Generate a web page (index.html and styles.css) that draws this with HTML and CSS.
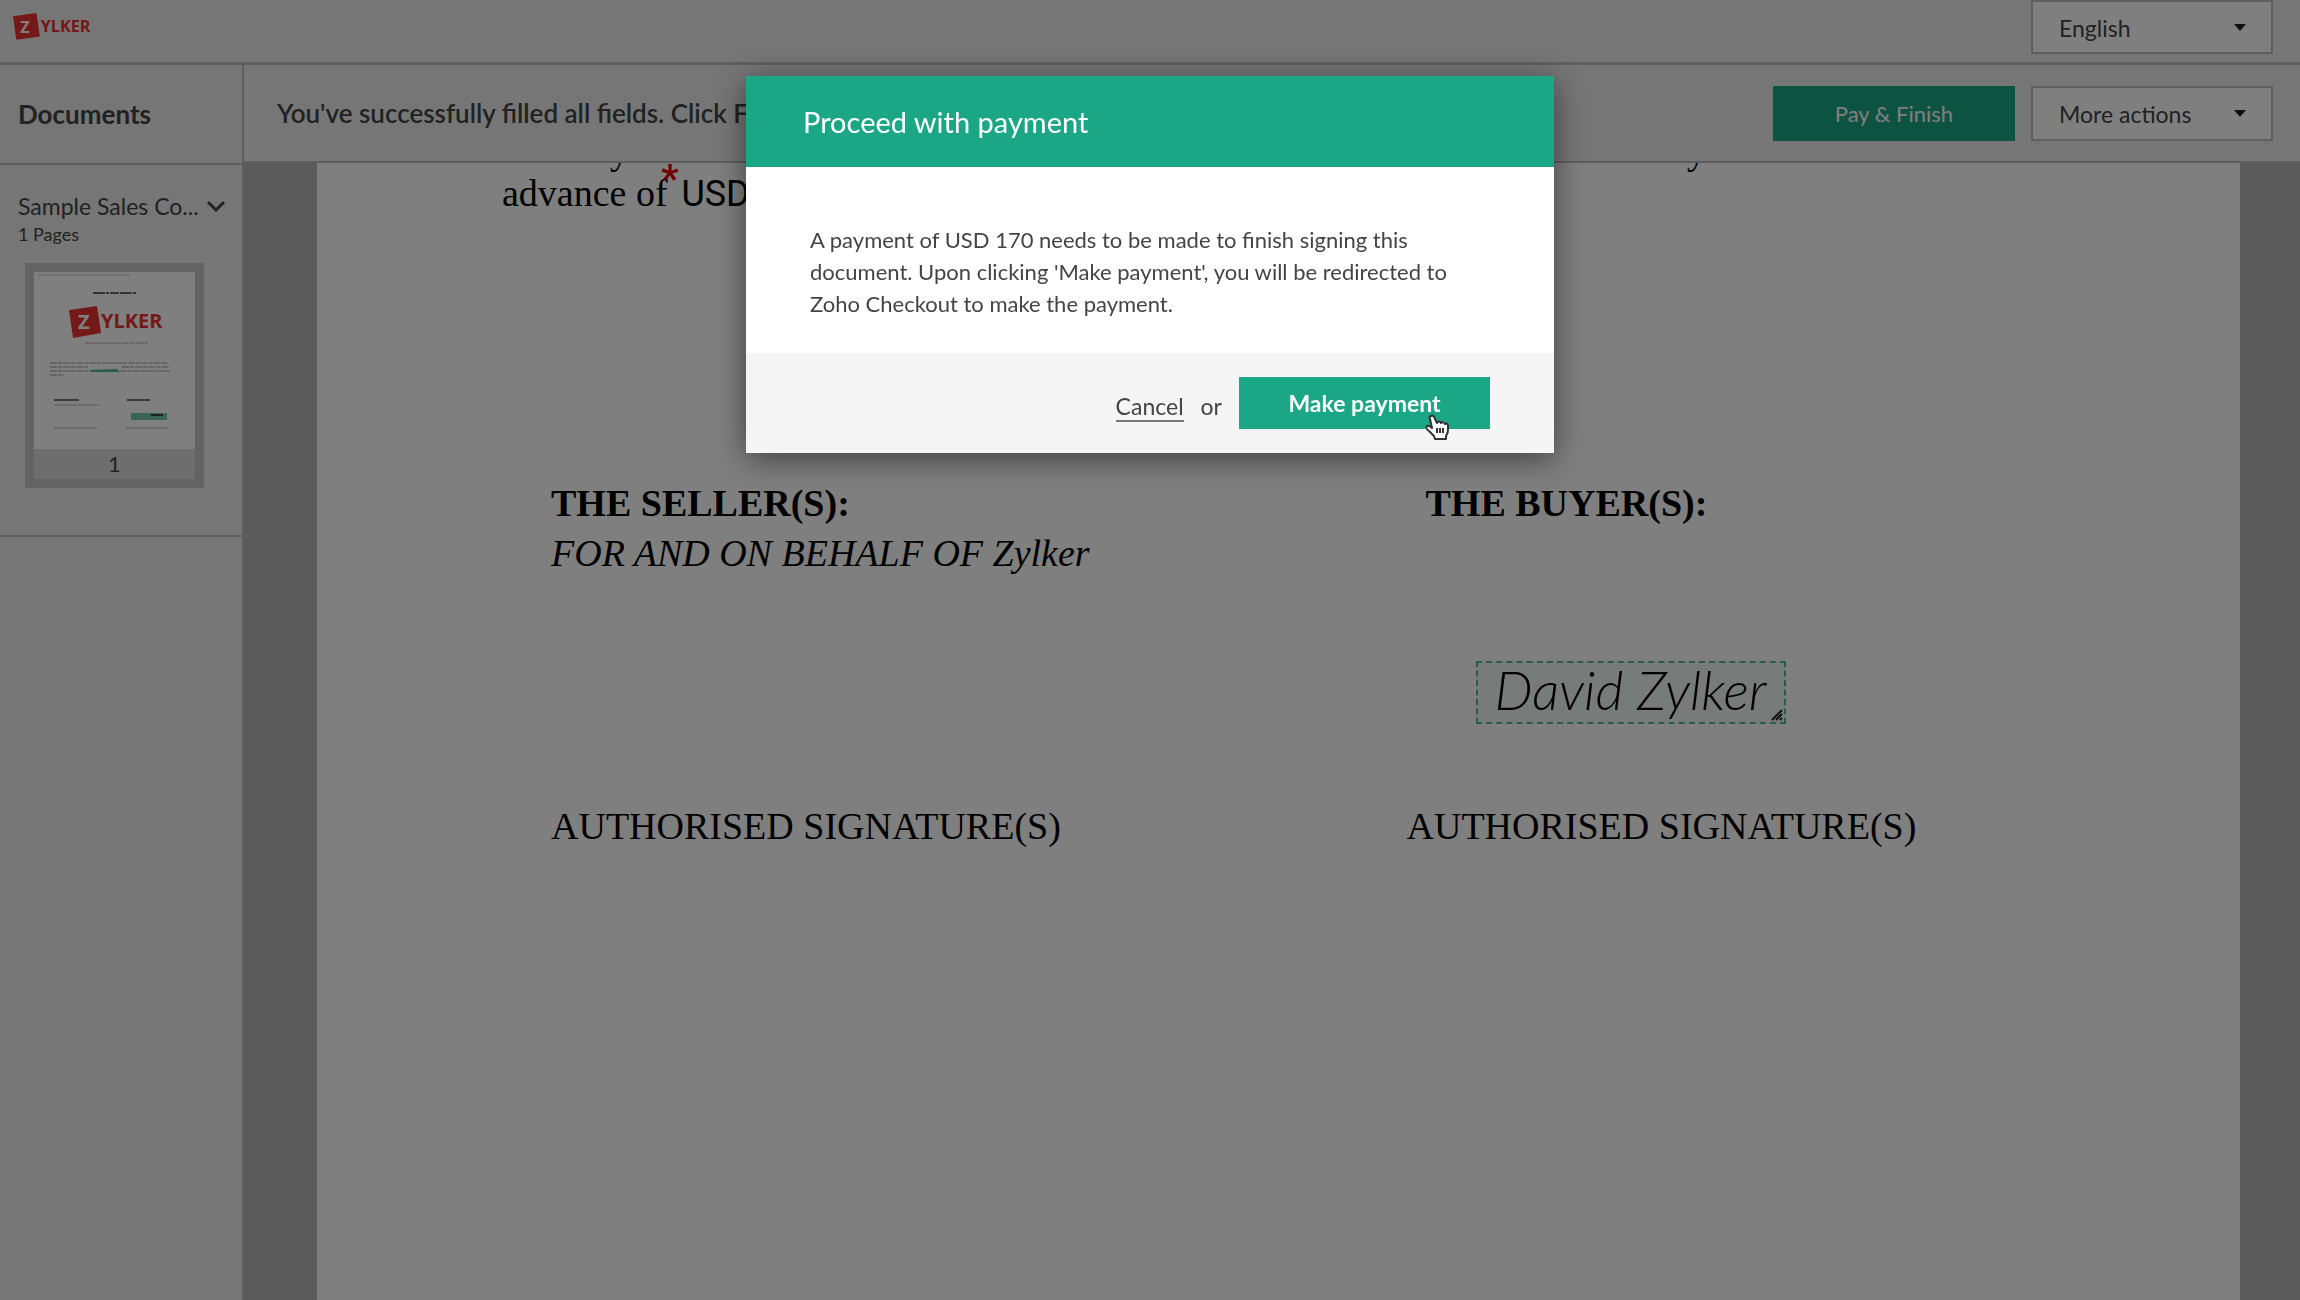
FILE: index.html
```html
<!DOCTYPE html>
<html lang="en">
<head>
  <meta charset="utf-8">
  <title>Proceed with payment</title>
  <link rel="stylesheet" href="styles.css">
</head>
<body>
  <header class="topbar">
    <svg class="logo" viewBox="0 0 96 34" role="img" aria-label="Zylker">
      <path d="M0 5L29 1L33 30L4 34Z" fill="#e8322e"/>
      <text x="9" y="25" class="logo-z">Z</text>
      <text x="34" y="24" class="logo-text">YLKER</text>
    </svg>
    <div class="dropdown">
      <select class="control" aria-label="Language">
        <option>English</option>
      </select>
    </div>
  </header>

  <div class="layout">
    <aside class="sidebar">
      <h2>Documents</h2>
      <div class="doc-group">
        <button class="doc-name">
          <span>Sample Sales Co...</span>
          <svg viewBox="0 0 18 12" fill="none" stroke="currentColor" stroke-width="3">
            <path d="M1 2l8 8 8-8"/>
          </svg>
        </button>
        <p class="doc-pages">1 Pages</p>
        <a class="thumb" href="#page-1">
          <svg viewBox="0 0 161 177" aria-hidden="true">
            <rect width="161" height="177" fill="#fff"/>
            <path d="M4 3h92" stroke="#bbb" stroke-width="1" stroke-dasharray="9 1 5 1"/>
            <path d="M59 21h44" stroke="#666" stroke-width="2" stroke-dasharray="12 1 3 1 9 1"/>
            <path d="M35 38L63 34L67 61L39 66Z" fill="#e8322e"/>
            <text x="44" y="57" class="logo-z">Z</text>
            <text x="67" y="56" class="logo-text">YLKER</text>
            <path d="M51 71h63" stroke="#aaa" stroke-width="1" stroke-dasharray="5 1 8 1"/>
            <path d="M16 91h118M16 95h38M88 95h48M16 99h40M86 99h50M16 103h14" stroke="#999" stroke-width="1" stroke-dasharray="7 1 4 1"/>
            <path d="M55 98l28-1 3 3H58z" fill="#55b895"/>
            <path d="M20 128h25M93 128h23" stroke="#777" stroke-width="2"/>
            <path d="M20 133h46M20 156h43M92 156h42" stroke="#aaa" stroke-width="1" stroke-dasharray="8 1 5 1"/>
            <rect x="97" y="141" width="36" height="7" fill="#75c8aa"/>
            <path d="M117 143h12" stroke="#444" stroke-width="2"/>
          </svg>
          <span>1</span>
        </a>
      </div>
    </aside>

    <main class="main">
      <div class="actionbar">
        <p>You've successfully filled all fields. Click F</p>
        <div class="actions">
          <button class="btn btn-pay">Pay &amp; Finish</button>
          <div class="dropdown">
            <button class="control" aria-haspopup="menu">More actions</button>
          </div>
        </div>
      </div>

      <div class="viewer">
        <article class="page" id="page-1">
          <div class="clause">
            <p class="clause-end"><span>y</span><span>y</span></p>
            <p class="advance">advance of <sup class="required">*</sup><span class="amount">USD</span></p>
          </div>
          <div class="parties">
            <section>
              <h3>THE SELLER(S):</h3>
              <p class="behalf">FOR AND ON BEHALF OF Zylker</p>
              <p class="authorised">AUTHORISED SIGNATURE(S)</p>
            </section>
            <section class="buyer">
              <h3>THE BUYER(S):</h3>
              <div class="signature">
                <span>David Zylker</span>
                <svg class="resize" viewBox="0 0 12 12" stroke="#222" stroke-width="2">
                  <path d="M1 11L11 1M5 11l6-6M9 11l2-2"/>
                </svg>
              </div>
              <p class="authorised">AUTHORISED SIGNATURE(S)</p>
            </section>
          </div>
        </article>
      </div>
    </main>
  </div>

  <div class="overlay">
    <div class="modal" role="dialog" aria-modal="true" aria-labelledby="modal-title">
      <h1 id="modal-title">Proceed with payment</h1>
      <p class="modal-body">A payment of USD 170 needs to be made to finish signing this document. Upon clicking 'Make payment', you will be redirected to Zoho Checkout to make the payment.</p>
      <div class="modal-footer">
        <a href="#cancel">Cancel</a>
        <span>or</span>
        <button class="btn btn-make">Make payment
          <svg class="cursor" viewBox="0 0 24 26" fill="#fff" stroke="#333" stroke-width="2" stroke-linejoin="round">
            <path d="M6 2c2-1 3 0 4 3l2 4c1-2 3-2 4 0 1-1 3-1 4 1 2-1 3 0 3 2v4c0 3-1 4-2 6v3H10l-1-3-5-5c-3-2-3-3-2-5 2-1 3 0 5 2L5 5c-1-2 0-3 1-3z"/>
            <path d="M12 14v5M15 14v5M18 14v5"/>
          </svg>
        </button>
      </div>
    </div>
  </div>
</body>
</html>
```

FILE: styles.css
```css
* {
  box-sizing: border-box;
}
body {
  margin: 0;
  height: 100vh;
  display: flex;
  flex-direction: column;
  overflow: hidden;
  font-family: Lato, sans-serif;
  font-size: 22px;
  color: #444;
  background: #ededed;
}
h1, h2, h3, p {
  margin: 0;
}
button, select {
  font: inherit;
  color: inherit;
  cursor: pointer;
}

/* top bar */
.topbar {
  height: 65px;
  flex-shrink: 0;
  display: flex;
  justify-content: space-between;
  align-items: flex-start;
  padding: 0 27px 0 13px;
  border-bottom: 3px solid #bdbdbd;
}
.logo {
  width: 78px;
  height: 28px;
  margin-top: 12px;
}
.logo-z,
.logo-text {
  font-family: "Open Sans", sans-serif;
  font-weight: 700;
  font-size: 20px;
}
.logo-z {
  fill: #fff;
}
.logo-text {
  fill: #e8322e;
}
.dropdown {
  position: relative;
  width: 242px;
}
.dropdown::after {
  content: "";
  position: absolute;
  right: 27px;
  top: 50%;
  margin-top: -3px;
  border: 6px solid transparent;
  border-top: 7px solid #222;
  border-bottom: 0;
  pointer-events: none;
}
.control {
  appearance: none;
  display: block;
  width: 100%;
  height: 55px;
  padding: 2px 26px 0;
  border: 2px solid #bdbdbd;
  border-radius: 0;
  background: #fff;
  font-size: 23px;
  text-align: left;
}
.topbar .control {
  height: 54px;
}

/* sidebar */
.layout {
  flex: 1;
  display: flex;
  min-height: 0;
}
.sidebar {
  width: 244px;
  flex-shrink: 0;
  border-right: 2px solid #bdbdbd;
}
.sidebar h2 {
  height: 100px;
  line-height: 98px;
  padding-left: 18px;
  border-bottom: 2px solid #bdbdbd;
  font-size: 26px;
}
.doc-group {
  padding: 27px 18px 47px;
  border-bottom: 2px solid #bdbdbd;
}
.doc-name {
  display: flex;
  align-items: center;
  gap: 8px;
  padding: 0;
  border: 0;
  background: none;
  font-size: 23px;
  line-height: 28px;
  white-space: nowrap;
}
.doc-name svg {
  width: 18px;
  height: 12px;
}
.doc-pages {
  font-size: 18px;
  line-height: 28px;
}
.thumb {
  display: block;
  width: 179px;
  margin: 15px 0 0 7px;
  padding: 9px;
  background: #c6c6c6;
  color: inherit;
  text-align: center;
  text-decoration: none;
}
.thumb svg {
  display: block;
  width: 100%;
}
.thumb span {
  display: block;
  line-height: 30px;
  background: #dcdcdc;
}

/* main column */
.main {
  flex: 1;
  display: flex;
  flex-direction: column;
  min-width: 0;
}
.actionbar {
  height: 98px;
  flex-shrink: 0;
  display: flex;
  justify-content: space-between;
  align-items: center;
  padding: 0 27px 0 33px;
  border-bottom: 2px solid #bdbdbd;
}
.actionbar p {
  font-size: 26px;
  font-weight: 600;
}
.actions {
  display: flex;
  gap: 16px;
}
.btn {
  border: 0;
  background: #1ba685;
  color: #fff;
}
.btn-pay {
  width: 242px;
  height: 55px;
}
.viewer {
  flex: 1;
  min-height: 0;
  padding: 0 60px 0 73px;
  background: #b6b6b6;
}

/* contract */
.page {
  height: 100%;
  overflow: hidden;
  background: #fff;
  font-family: "Liberation Serif", serif;
  font-size: 38px;
  line-height: 50px;
  color: #000;
}
.clause {
  height: 327px;
  padding: 0 534px 0 185px;
}
.clause-end {
  display: flex;
  justify-content: space-between;
  height: 18px;
  margin-top: -12px;
  padding-left: 108px;
  line-height: 0;
}
.advance {
  line-height: 48px;
  white-space: nowrap;
}
.required {
  margin: 0 3px 0 -16px;
  color: #e00000;
  line-height: 0;
  font-family: Roboto, sans-serif;
  font-weight: 700;
  font-size: 38px;
}
.amount {
  font-family: Roboto, sans-serif;
  font-size: 36px;
}
.parties {
  display: grid;
  grid-template-columns: 1fr 1fr;
  gap: 22px;
  padding-left: 234px;
}
.parties h3 {
  font-size: 38px;
}
.behalf {
  font-style: italic;
  margin-bottom: 223px;
}
.buyer h3 {
  padding-left: 19px;
}
.signature {
  position: relative;
  width: 310px;
  height: 63px;
  margin: 133px 0 77px 69px;
  border: 2px dashed #55b895;
  background: #eef8f4;
  font-family: Lato, cursive;
  font-style: italic;
  font-weight: 300;
  font-size: 54px;
  line-height: 54px;
  text-align: center;
}
.resize {
  position: absolute;
  right: 1px;
  bottom: 1px;
  width: 12px;
  height: 12px;
}

/* payment dialog */
.overlay {
  position: fixed;
  inset: 0;
  display: flex;
  justify-content: center;
  align-items: flex-start;
  padding-top: 76px;
  background: rgba(0, 0, 0, 0.5);
}
.modal {
  width: 808px;
  background: #fff;
  box-shadow: 0 6px 30px rgba(0, 0, 0, 0.5);
}
.modal h1 {
  padding: 0 57px;
  background: #1ba685;
  color: #fff;
  font-size: 29px;
  font-weight: 400;
  line-height: 91px;
}
.modal-body {
  padding: 57px 64px 33px;
  line-height: 32px;
}
.modal-footer {
  display: flex;
  justify-content: flex-end;
  align-items: center;
  gap: 17px;
  height: 100px;
  padding: 0 64px;
  background: #f5f5f5;
  font-size: 23px;
}
.modal-footer a,
.modal-footer span {
  padding-top: 8px;
  color: inherit;
  text-decoration: none;
  border-bottom: 2px solid transparent;
}
.modal-footer a {
  border-color: #777;
}
.btn-make {
  position: relative;
  width: 251px;
  height: 52px;
  font-weight: 700;
}
.cursor {
  position: absolute;
  right: 41px;
  top: 37px;
  width: 24px;
  height: 26px;
}
```
